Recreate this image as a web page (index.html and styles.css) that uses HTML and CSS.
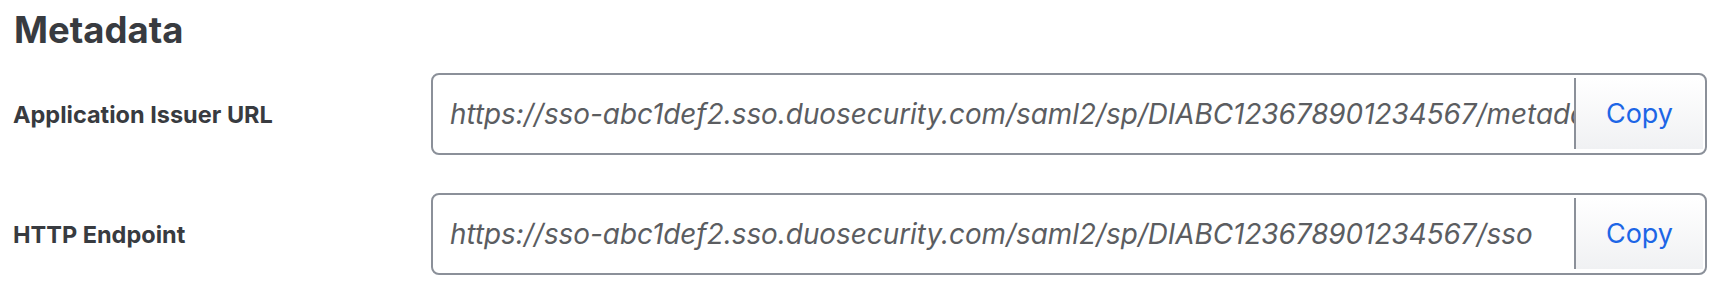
FILE: index.html
```html
<!DOCTYPE html>
<html>
<head>
<meta charset="utf-8">
<link rel="stylesheet" href="styles.css">
</head>
<body>
<section class="metadata">
  <h2 class="title">Metadata</h2>
  <div class="rows">
    <div class="row">
      <label class="label">Application Issuer URL</label>
      <div class="field">
        <input class="value" type="text" readonly value="https://sso-abc1def2.sso.duosecurity.com/saml2/sp/DIABC123678901234567/metadata">
        <button class="copy">Copy</button>
      </div>
    </div>
    <div class="row">
      <label class="label">HTTP Endpoint</label>
      <div class="field">
        <input class="value" type="text" readonly value="https://sso-abc1def2.sso.duosecurity.com/saml2/sp/DIABC123678901234567/sso">
        <button class="copy">Copy</button>
      </div>
    </div>
  </div>
</section>
</body>
</html>
```
FILE: styles.css
```css
html, body {
  margin: 0;
  padding: 0;
  background: #ffffff;
}
body {
  font-family: Inter, "Liberation Sans", sans-serif;
  color: #3b3e43;
}
.metadata {
  padding: 8px 19px 0 13px;
}
.title {
  margin: 0;
  font-size: 36.5px;
  font-weight: 700;
  line-height: 44px;
  color: #383b40;
  padding-left: 1px;
}
.rows {
  margin-top: 21px;
  display: flex;
  flex-direction: column;
  gap: 38px;
}
.row {
  display: grid;
  grid-template-columns: 418px 1fr;
  align-items: center;
}
.label {
  font-size: 23.5px;
  font-weight: 700;
  color: #383b40;
}
.field {
  display: flex;
  align-items: stretch;
  height: 82px;
  box-sizing: border-box;
  border: 2px solid #8b9099;
  border-radius: 8px;
  padding: 3px 2px 4px 0;
  background: #fff;
}
.value {
  flex: 1;
  min-width: 0;
  border: none;
  outline: none;
  background: transparent;
  padding: 0 0 0 17px;
  font-family: Inter, "Liberation Sans", sans-serif;
  font-style: italic;
  font-size: 27.85px;
  color: #5b5d61;
}
.copy {
  width: 129px;
  border: none;
  border-left: 2px solid #8b9099;
  background: linear-gradient(#ffffff, #f0f1f3);
  font-family: Inter, "Liberation Sans", sans-serif;
  font-size: 27px;
  color: #1d66e6;
  padding: 0;
}
```
